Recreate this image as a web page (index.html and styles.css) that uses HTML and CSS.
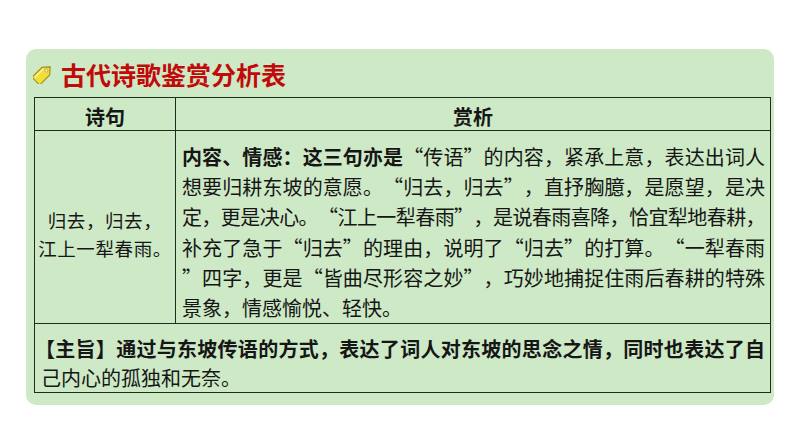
FILE: index.html
```html
<!DOCTYPE html>
<html lang="zh-CN">
<head>
<meta charset="utf-8">
<link rel="stylesheet" href="styles.css">
</head>
<body>
<div class="panel">
  <div class="title">
    <svg class="tag" width="20" height="20" viewBox="0 0 20 20">
      <g transform="translate(10 10) rotate(-45) scale(1.35) translate(-8 -4.5)">
        <path d="M1.5 0.5 H11 L15.5 4.5 L11 8.5 H1.5 Q0.5 8.5 0.5 7.5 V1.5 Q0.5 0.5 1.5 0.5 Z" fill="#f3df3a" stroke="#9c8b1c" stroke-width="0.8"/>
        <path d="M2 2 H10.5" stroke="#fbf3a8" stroke-width="1"/>
        <circle cx="11.6" cy="4.5" r="1.1" fill="#fffbe0" stroke="#9c8b1c" stroke-width="0.5"/>
      </g>
    </svg>
    <span class="title-text">古代诗歌鉴赏分析表</span>
  </div>
  <table class="tbl">
    <tr class="head">
      <th class="c1">诗句</th>
      <th class="c2">赏析</th>
    </tr>
    <tr class="main">
      <td class="c1 poem">
        <div>归去，归去，</div>
        <div>江上一犁春雨。</div>
      </td>
      <td class="c2 analysis">
        <div class="ln"><b>内容、情感：这三句亦是</b>“传语”的内容，紧承上意，表达出词人</div>
        <div class="ln">想要归耕东坡的意愿。“归去，归去”，直抒胸臆，是愿望，是决</div>
        <div class="ln tight">定，更是决心。“江上一犁春雨”，是说春雨喜降，恰宜犁地春耕，</div>
        <div class="ln">补充了急于“归去”的理由，说明了“归去”的打算。“一犁春雨</div>
        <div class="ln">”四字，更是“皆曲尽形容之妙”，巧妙地捕捉住雨后春耕的特殊</div>
        <div class="ln last">景象，情感愉悦、轻快。</div>
      </td>
    </tr>
    <tr class="theme">
      <td colspan="2" class="summary">
        <div class="ln"><b><span class="lbr">【</span>主旨】通过与东坡传语的方式，表达了词人对东坡的思念之情，同时也表达了自</b></div>
        <div class="ln last">己内心的孤独和无奈。</div>
      </td>
    </tr>
  </table>
</div>
</body>
</html>
```

FILE: styles.css
```css
html, body {
  margin: 0;
  padding: 0;
  background: #ffffff;
}
body {
  font-family: "Noto Sans CJK SC", "Noto Sans", sans-serif;
  color: #161616;
}
.panel {
  margin: 49px 0 0 26px;
  width: 748px;
  height: 356px;
  box-sizing: border-box;
  padding: 0 3px 0 8px;
  background: #cde9c5;
  border-radius: 10px;
}
.title {
  height: 48px;
  display: flex;
  align-items: center;
}
.tag {
  margin-left: -1px;
  margin-top: 1px;
}
.title-text {
  margin-left: 8px;
  font-size: 25px;
  font-weight: 700;
  color: #c20a0a;
  line-height: 1;
  margin-top: 2px;
}
.tbl {
  width: 737px;
  border-collapse: collapse;
  table-layout: fixed;
  text-spacing-trim: space-all;
}
.tbl th, .tbl td {
  border: 1.6px solid #1f2e1c;
  padding: 0;
}
.c1 { width: 141px; }
.head th {
  height: 33px;
  font-size: 20px;
  font-weight: 700;
  line-height: 1;
  padding-top: 5px;
  box-sizing: border-box;
  vertical-align: middle;
}
.main td {
  height: 193px;
  box-sizing: border-box;
}
.poem {
  text-align: center;
  font-size: 18.5px;
  line-height: 28px;
  vertical-align: middle;
  padding-top: 13px !important;
  letter-spacing: 0.6px;
}
.analysis {
  vertical-align: top;
  padding: 11px 5px 0 6px !important;
  font-size: 20px;
  line-height: 30.2px;
}
.ln {
  text-align: justify;
  text-align-last: justify;
  white-space: nowrap;
}
.ln.last {
  text-align-last: left;
}
.ln.tight {
  letter-spacing: -0.6px;
}
.ln b {
  font-weight: 700;
}
.lbr {
  margin-left: -6px;
}
.theme td {
  height: 68px;
  box-sizing: border-box;
}
.summary {
  vertical-align: top;
  padding: 10px 5px 0 6px !important;
  font-size: 20px;
  line-height: 29px;
}
```
